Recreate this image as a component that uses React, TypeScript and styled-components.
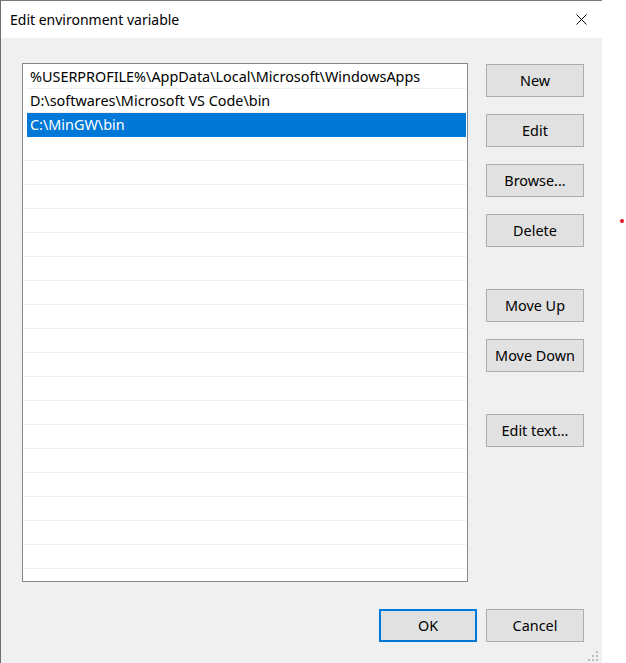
import React from "react";
import styled, { createGlobalStyle } from "styled-components";

const Global = createGlobalStyle`
  html, body { margin: 0; padding: 0; background: #ffffff; }
  body { font-family: "Noto Sans", "Open Sans", sans-serif; }
  * { box-sizing: border-box; }
`;

const Page = styled.div`
  position: relative;
  width: 626px;
  height: 663px;
  overflow: hidden;
  background: #ffffff;
`;

const Window = styled.div`
  width: 602px;
  height: 663px;
  display: flex;
  flex-direction: column;
  background: #f0f0f0;
  border-top: 1px solid #7a7a7a;
  border-left: 1px solid #6f6f6f;
`;

const TitleBar = styled.div`
  height: 37px;
  flex: none;
  background: #ffffff;
  display: flex;
  align-items: center;
  justify-content: space-between;
  padding: 0 15px 0 9px;
`;

const Title = styled.div`
  font-size: 14px;
  color: #000000;
`;

const CloseIcon = styled.svg`
  width: 11px;
  height: 11px;
  margin-bottom: 1px;
`;

const Body = styled.div`
  flex: 1;
  display: flex;
  flex-direction: column;
  padding: 25px 18px 0 21px;
`;

const Main = styled.div`
  display: flex;
  gap: 18px;
`;

const ListBox = styled.div`
  width: 446px;
  height: 519px;
  padding-top: 1px;
  background: #ffffff;
  border: 1px solid #828790;
  overflow: hidden;
  display: flex;
  flex-direction: column;
`;

const Row = styled.div<{ $selected?: boolean; $item?: boolean }>`
  height: 24px;
  flex: none;
  margin-left: ${(p) => (p.$item ? "4px" : "0")};
  margin-right: 1px;
  display: flex;
  align-items: center;
  padding-left: 3px;
  font-size: 14.4px;
  white-space: nowrap;
  color: ${(p) => (p.$selected ? "#ffffff" : "#000000")};
  background: ${(p) => (p.$selected ? "#0078d7" : "transparent")};
  border-bottom: 1px solid ${(p) => (p.$selected ? "#0078d7" : "#f0f0f0")};
`;

const ButtonColumn = styled.div`
  display: flex;
  flex-direction: column;
  padding-top: 1px;
`;

const Btn = styled.button<{ $gap?: number; $default?: boolean }>`
  width: 98px;
  height: 33px;
  margin-top: ${(p) => p.$gap ?? 0}px;
  background: #e1e1e1;
  border: ${(p) => (p.$default ? "2px solid #0078d7" : "1px solid #adadad")};
  font-family: "Noto Sans", "Open Sans", sans-serif;
  font-size: 14.4px;
  color: #000000;
  padding: 0;
  display: flex;
  align-items: center;
  justify-content: center;
`;

const Footer = styled.div`
  display: flex;
  justify-content: flex-end;
  gap: 9px;
  margin-top: 27px;
`;

const Grip = styled.svg`
  position: absolute;
  left: 588px;
  top: 651px;
  width: 12px;
  height: 12px;
`;

const RedDot = styled.div`
  position: absolute;
  left: 620px;
  top: 219px;
  width: 4px;
  height: 4px;
  border-radius: 50%;
  background: #e0141e;
`;

const items = [
  "%USERPROFILE%\\AppData\\Local\\Microsoft\\WindowsApps",
  "D:\\softwares\\Microsoft VS Code\\bin",
  "C:\\MinGW\\bin",
];

export default function App() {
  const empty = Array.from({ length: 20 });
  return (
    <Page>
      <Global />
      <Window>
        <TitleBar>
          <Title>Edit environment variable</Title>
          <CloseIcon viewBox="0 0 11 11">
            <path d="M0.5 0.5 L10.5 10.5 M10.5 0.5 L0.5 10.5" stroke="#000" strokeWidth="1" fill="none" />
          </CloseIcon>
        </TitleBar>
        <Body>
          <Main>
            <ListBox>
              {items.map((t, i) => (
                <Row key={i} $item $selected={i === 2}>
                  {t}
                </Row>
              ))}
              {empty.map((_, i) => (
                <Row key={"e" + i} />
              ))}
            </ListBox>
            <ButtonColumn>
              <Btn>New</Btn>
              <Btn $gap={17}>Edit</Btn>
              <Btn $gap={17}>Browse...</Btn>
              <Btn $gap={17}>Delete</Btn>
              <Btn $gap={42}>Move Up</Btn>
              <Btn $gap={17}>Move Down</Btn>
              <Btn $gap={42}>Edit text...</Btn>
            </ButtonColumn>
          </Main>
          <Footer>
            <Btn $default>OK</Btn>
            <Btn>Cancel</Btn>
          </Footer>
        </Body>
      </Window>
      <Grip viewBox="0 0 12 12">
        <rect x="8" y="0" width="2" height="2" fill="#bcbcbc" />
        <rect x="4" y="4" width="2" height="2" fill="#bcbcbc" />
        <rect x="8" y="4" width="2" height="2" fill="#bcbcbc" />
        <rect x="0" y="8" width="2" height="2" fill="#bcbcbc" />
        <rect x="4" y="8" width="2" height="2" fill="#bcbcbc" />
        <rect x="8" y="8" width="2" height="2" fill="#bcbcbc" />
      </Grip>
      <RedDot />
    </Page>
  );
}
